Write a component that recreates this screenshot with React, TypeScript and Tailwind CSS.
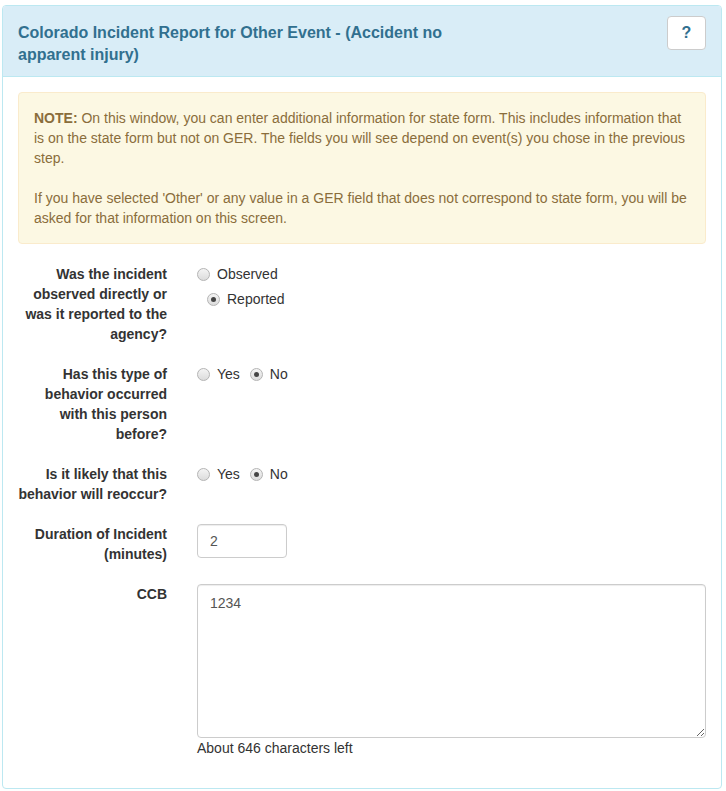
import React from 'react';

const font = { fontFamily: '"Liberation Sans", Arial, Helvetica, sans-serif' };

function Radio({ checked, label }: { checked?: boolean; label: string }) {
    return (
        <label className="flex items-center h-5 text-[14px] text-[#333]">
            <span className="w-[13px] h-[13px] rounded-full border border-[#b4b4b4] bg-gradient-to-b from-[#f4f4f4] to-[#dcdcdc] flex items-center justify-center">
                {checked && <span className="w-[5px] h-[5px] rounded-full bg-[#444]" />}
            </span>
            <span className="ml-[7px]">{label}</span>
        </label>
    );
}

function Row({ label, children }: { label: React.ReactNode; children: React.ReactNode }) {
    return (
        <div className="flex items-start">
            <div className="w-[149px] text-right font-bold text-[14px] leading-5 text-[#333]">{label}</div>
            <div className="ml-[30px] flex-1">{children}</div>
        </div>
    );
}

export default function App() {
    return (
        <div className="bg-white min-h-[791px] pt-[5px] pl-[2px]" style={font}>
            <div className="w-[720px] border border-[#bce8f1] rounded-[4px] bg-white">
                {/* Panel heading */}
                <div className="flex items-start justify-between bg-[#d9edf7] border-b border-[#bce8f1] rounded-t-[3px] px-[15px] pt-[10px] pb-[10px]">
                    <h3 className="w-[440px] mt-[6px] text-[16px] leading-[22px] font-bold text-[#31708f]">
                        Colorado Incident Report for Other Event - (Accident no apparent injury)
                    </h3>
                    <button className="w-[39px] h-[34px] bg-white border border-[#ccc] rounded-[4px] text-[16px] font-bold text-[#31708f] flex items-center justify-center">
                        ?
                    </button>
                </div>

                {/* Panel body */}
                <div className="p-[15px]">
                    <div className="bg-[#fcf8e3] border border-[#faebcc] rounded-[4px] p-[15px] text-[14px] leading-5 text-[#8a6d3b]">
                        <p>
                            <b>NOTE:</b> On this window, you can enter additional information for state form. This includes information that is on the state form but not on GER. The fields you will see depend on event(s) you chose in the previous step.
                        </p>
                        <p className="mt-5">
                            If you have selected 'Other' or any value in a GER field that does not correspond to state form, you will be asked for that information on this screen.
                        </p>
                    </div>

                    <div className="mt-5 flex flex-col gap-5">
                        <Row label={<>Was the incident observed directly or was it reported to the agency?</>}>
                            <div className="flex flex-col gap-[5px]">
                                <Radio label="Observed" />
                                <div className="ml-[10px]">
                                    <Radio label="Reported" checked />
                                </div>
                            </div>
                        </Row>

                        <Row label={<>Has this type of behavior occurred with this person before?</>}>
                            <div className="flex gap-[10px]">
                                <Radio label="Yes" />
                                <Radio label="No" checked />
                            </div>
                        </Row>

                        <Row label={<>Is it likely that this behavior will reoccur?</>}>
                            <div className="flex gap-[10px]">
                                <Radio label="Yes" />
                                <Radio label="No" checked />
                            </div>
                        </Row>

                        <Row label={<>Duration of Incident (minutes)</>}>
                            <input
                                defaultValue="2"
                                className="w-[90px] h-[34px] border border-[#ccc] rounded-[4px] px-[12px] text-[14px] text-[#555] shadow-[inset_0_1px_1px_rgba(0,0,0,0.075)] outline-none"
                            />
                        </Row>

                        <Row label="CCB">
                            <textarea
                                defaultValue="1234"
                                className="block w-full h-[154px] border border-[#ccc] rounded-[4px] px-[12px] py-[8px] text-[14px] leading-5 text-[#555] shadow-[inset_0_1px_1px_rgba(0,0,0,0.075)] outline-none"
                            />
                            <div className="mb-[15px] text-[14px] leading-5 text-[#333]">About 646 characters left</div>
                        </Row>
                    </div>
                </div>
            </div>
        </div>
    );
}
